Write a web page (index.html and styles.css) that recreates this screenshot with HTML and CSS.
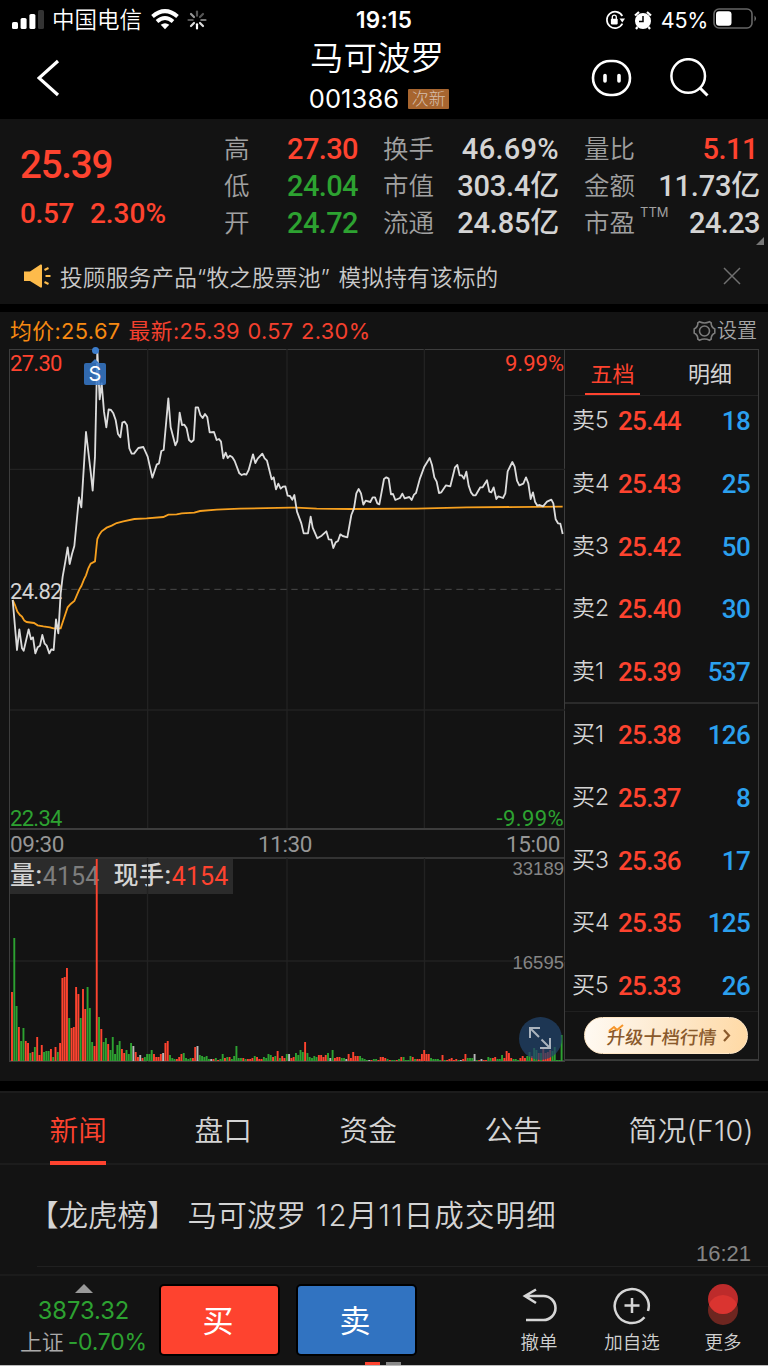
FILE: index.html
```html
<!DOCTYPE html>
<html lang="zh-CN">
<head>
<meta charset="utf-8">
<title>马可波罗 001386</title>
<link rel="stylesheet" href="styles.css">
</head>
<body>
<div class="app">
  <header class="top">
    <div class="status">
      <div class="status-left">
        <svg class="signal" width="32" height="20" viewBox="0 0 32 20"><g fill="#fff"><rect x="0" y="12" width="6" height="7" rx="1.6"/><rect x="8.6" y="8" width="6" height="11" rx="1.6"/><rect x="17.4" y="4" width="6" height="15" rx="1.6"/></g><rect x="26" y="0" width="6" height="19" rx="1.6" fill="#333"/></svg>
        <span class="carrier">中国电信</span>
        <svg class="wifi" width="28" height="21" viewBox="0 0 28 21"><g fill="none" stroke="#fff" stroke-width="4"><path d="M1.5 7.6Q14-3.2 26.500 7.600"/><path d="M6 12.400Q14 5.600 22 12.400"/></g><path d="M9.700 15.800Q14 12.500 18.300 15.800L14 20.300Z" fill="#fff"/></svg>
        <svg class="spin" width="20" height="20" viewBox="0 0 20 20" fill="none" stroke-width="2.200" stroke-linecap="round"><path d="M10 1.500v4.200" stroke="#555"/><path d="M16 4l-3 3" stroke="#555"/><path d="M18.500 10h-4.200" stroke="#777"/><path d="M16 16l-3-3" stroke="#ddd"/><path d="M10 18.500v-4.200" stroke="#fff"/><path d="M4 16l3-3" stroke="#ddd"/><path d="M1.500 10h4.200" stroke="#555"/><path d="M4 4l3 3" stroke="#999"/></svg>
      </div>
      <div class="clock">19:15</div>
      <div class="status-right">
        <svg width="20" height="20" viewBox="0 0 20 20"><path d="M17.300 6A8.200 8.200 0 1 0 17.400 13.700" fill="none" stroke="#fff" stroke-width="1.700"/><path d="M14.500 8.500h5.500l-2.700 4z" fill="#fff"/><rect x="5.900" y="8.800" width="6.800" height="5.600" rx=".8" fill="#fff"/><path d="M7.300 9V7.200a2 2 0 0 1 4 0V9" fill="none" stroke="#fff" stroke-width="1.300"/></svg>
        <svg class="alarm" width="18" height="19" viewBox="0 0 18 19"><circle cx="9" cy="10" r="8" fill="#fff"/><path d="M1 4.500L5 1M17 4.500L13 1M3.500 16l-1.500 2M14.500 16l1.500 2" stroke="#fff" stroke-width="2.200"/><path d="M9 5v5.500H5" fill="none" stroke="#000" stroke-width="1.500"/></svg>
        <span class="pct">45%</span>
        <svg class="battery" width="45" height="22" viewBox="0 0 45 22"><rect x="1" y="1" width="38" height="19" rx="5" fill="none" stroke="#666" stroke-width="1.600"/><rect x="3" y="3.300" width="15.500" height="14.400" rx="3" fill="#fff"/><path d="M41.500 7.500q3 3 0 6z" fill="#777"/></svg>
      </div>
    </div>
    <div class="nav">
      <svg class="back" width="24" height="38" viewBox="0 0 24 38"><path d="M21 2L2 19L21 36" fill="none" stroke="#fff" stroke-width="3.200"/></svg>
      <div class="title">
        <div class="name">马可波罗</div>
        <div class="code">001386<span class="tag">次新</span></div>
      </div>
      <svg class="robot" width="42" height="38" viewBox="0 0 42 38"><rect x="2" y="2" width="37" height="34" rx="17" fill="none" stroke="#fff" stroke-width="2.600"/><path d="M14 16.500v5.500M28 16.500v5.500" stroke="#fff" stroke-width="3.600" stroke-linecap="round"/></svg>
      <svg class="search" width="40" height="40" viewBox="0 0 40 40" fill="none" stroke="#fff"><circle cx="18.200" cy="18" r="16.800" stroke-width="2.500"/><path d="M29.500 29.500l8 8" stroke-width="3"/></svg>
    </div>
  </header>

  <section class="quote">
    <div class="figures">
      <div class="main-price num">
        <div class="price">25.39</div>
        <div class="change"><span>0.57</span><span>2.30%</span></div>
      </div>
      <dl class="stats">
        <dt>高</dt><dd class="num up">27.30</dd><dt>换手</dt><dd class="num wide">46.69%</dd><dt>量比</dt><dd class="num up last ratio">5.11</dd>
        <dt>低</dt><dd class="num down">24.04</dd><dt>市值</dt><dd class="num unit">303.4亿</dd><dt>金额</dt><dd class="num last unit">11.73亿</dd>
        <dt>开</dt><dd class="num down">24.72</dd><dt>流通</dt><dd class="num unit">24.85亿</dd><dt>市盈<sup>TTM</sup></dt><dd class="num last">24.23</dd>
      </dl>
      <i class="corner"></i>
    </div>
    <div class="notice">
      <svg width="27" height="24" viewBox="0 0 27 24"><path d="M0 7.500h6L16.500.500Q18 0 18 1.500v21Q18 24 16.500 23.500L6 17H0z" fill="#fdbb4b"/><path d="M20.500 6l4-2M21.500 12h5M20.500 18l4 2" stroke="#fdbb4b" stroke-width="2"/></svg>
      <span>投顾服务产品“牧之股票池” 模拟持有该标的</span>
      <svg class="close" width="18" height="18" viewBox="0 0 18 18"><path d="M1 1l16 16M17 1L1 17" stroke="#707070" stroke-width="1.500"/></svg>
    </div>
  </section>

  <section class="market">
    <div class="legend">
      <span class="avg">均价:25.67</span><span class="latest">最新:25.39 0.57 2.30%</span>
      <span class="settings"><svg width="23" height="22" viewBox="0 0 23 22" fill="none" stroke="#7b7b7b" stroke-width="1.600"><path d="M6.500 1.700Q11.500 4.200 16.500 1.700L18.200 3Q18 7 21.800 9V13Q18 15 18.200 19L16.500 20.300Q11.500 17.800 6.500 20.300L4.800 19Q5 15 1.200 13V9Q5 7 4.800 3Z"/><circle cx="11.500" cy="11" r="5"/></svg>设置</span>
    </div>
    <div class="board">
      <div class="charts">
        <div class="kline num">
          <svg width="555" height="479" viewBox="30 27 1665 1437" fill="none">
            <path d="M443 27V1464M861 27V1464M1273 27V1464M30 388H1695M30 1110H1695" stroke="#222" stroke-width="4"/>
            <path d="M30 748H1695" stroke="#4a4a4a" stroke-width="3" stroke-dasharray="19 14" stroke-dashoffset="14"/>
            <polyline stroke="#f6a01f" stroke-width="5.500" points="38,780 45,795 52,815 60,825 66,830 73,842 80,846 102,849 113,856 130,859 150,862 160,865 182,865 192,835 203,802 212,792 223,783 238,748 244,738 252,718 258,706 265,685 272,671 285,664 290,615 292,597 298,584 305,574 320,563 335,557 350,549 370,544 403,537 440,535 490,531 505,524 530,523 545,520 583,518 600,513 650,509 720,506 870,503 890,503 950,506 1050,507 1250,506 1400,502 1688,500"/>
            <polyline class="price-line" stroke="#dcdcdc" stroke-width="5.500" stroke-linejoin="round" points="38,780 51,930 58,868 66,925 71,932 86,868 93,898 99,892 106,940 113,922 120,917 127,885 134,911 140,917 148,940 154,928 161,930 168,838 175,880 182,760 188,710 196,665 203,622 209,672 216,642 223,618 237,472 244,502 258,276 272,395 278,452 285,350 292,30 299,178 305,130 312,215 319,262 326,208 333,210 340,220 347,240 354,282 361,292 367,248 374,245 381,256 388,325 395,341 402,341 415,324 430,321 443,350 457,413 470,374 477,370 484,333 491,330 505,175 512,262 526,316 532,303 539,218 546,255 553,254 560,265 567,300 574,306 581,300 587,202 594,202 601,225 608,234 615,222 622,232 629,277 642,276 650,300 657,297 663,305 670,355 677,338 683,354 690,347 697,352 704,363 718,400 725,405 732,402 739,404 746,390 759,343 766,369 773,356 787,341 794,355 801,362 815,418 821,412 828,448 835,431 842,446 849,440 856,439 863,467 870,468 877,479 883,465 891,515 904,550 911,580 924,580 932,530 938,563 952,595 965,587 979,574 986,598 994,599 1000,624 1007,607 1014,603 1021,583 1028,588 1042,592 1054,525 1062,505 1069,460 1076,447 1083,460 1090,494 1097,482 1111,486 1118,472 1125,472 1132,490 1138,493 1152,417 1159,412 1166,416 1173,463 1179,462 1186,480 1200,474 1207,461 1214,475 1228,471 1235,480 1242,464 1248,459 1260,415 1273,380 1289,354 1296,375 1303,412 1310,425 1317,459 1324,457 1338,436 1351,439 1365,382 1372,375 1379,406 1385,406 1392,416 1399,395 1406,437 1413,457 1420,466 1427,466 1441,442 1448,442 1461,421 1468,455 1474,457 1481,442 1489,477 1495,469 1509,474 1516,460 1523,394 1537,366 1544,380 1551,422 1558,436 1570,431 1578,412 1585,430 1592,477 1599,457 1605,485 1612,497 1619,495 1629,499 1641,485 1654,479 1660,490 1667,538 1674,550 1681,551 1688,582"/>
          </svg>
          <span class="lab top-left up">27.30</span><span class="lab top-right up">9.99%</span>
          <span class="lab mid-left">24.82</span>
          <span class="lab bot-left down">22.34</span><span class="lab bot-right down">-9.99%</span>
          <i class="dot"></i><span class="mark">S</span>
        </div>
        <div class="times num"><span>09:30</span><span>11:30</span><span>15:00</span></div>
        <div class="volume">
          <div class="vol-info num"><b>量:</b><span class="vol-a">4154</span><b class="vol-c">现手:</b><span class="up">4154</span></div>
          <svg id="bars" width="555" height="204" viewBox="10 858 555 204"><path d="M147.500 858V1062M287 858V1062M424.500 858V1062M10 961H565" stroke="#222" stroke-width="1.300"/></svg>
          <span class="scale s-top">33189</span><span class="scale s-mid">16595</span>
          <span class="expand"><svg width="24" height="24" viewBox="0 0 24 24" fill="none" stroke="#aab3bd" stroke-width="2"><path d="M2 12V2h10M2 2l9 9M22 12v10H12M22 22l-8.500-8.500"/></svg></span>
        </div>
      </div>
      <aside class="depth">
        <div class="depth-tabs"><span class="on">五档</span><span>明细</span></div>
        <div class="orders sells">
          <div><span>卖5</span><b>25.44</b><em>18</em></div>
          <div><span>卖4</span><b>25.43</b><em>25</em></div>
          <div><span>卖3</span><b>25.42</b><em>50</em></div>
          <div><span>卖2</span><b>25.40</b><em>30</em></div>
          <div><span>卖1</span><b>25.39</b><em>537</em></div>
        </div>
        <div class="orders buys">
          <div><span>买1</span><b>25.38</b><em>126</em></div>
          <div><span>买2</span><b>25.37</b><em>8</em></div>
          <div><span>买3</span><b>25.36</b><em>17</em></div>
          <div><span>买4</span><b>25.35</b><em>125</em></div>
          <div><span>买5</span><b>25.33</b><em>26</em></div>
        </div>
        <div class="upgrade"><div class="pill"><span>升级十档行情</span><svg width="8" height="13" viewBox="0 0 8 13"><path d="M1 1l5 5.500L1 12" fill="none" stroke="#8a5a2c" stroke-width="2.200"/></svg><svg class="spark" width="17" height="9" viewBox="0 0 17 9"><path d="M1 7l5-4 3 3 6-5" fill="none" stroke="#f6952a" stroke-width="2"/></svg></div></div>
      </aside>
    </div>
  </section>

  <nav class="tabs"><span class="on">新闻</span><span>盘口</span><span>资金</span><span>公告</span><span class="f10">简况(F10)</span></nav>
  <article class="news">
    <h3><span>【龙虎榜】</span><span class="subject">马可波罗 <span class="rest">12月11日成交明细</span></span></h3>
    <time>16:21</time>
    <hr>
  </article>

  <footer class="bar">
    <div class="index"><i></i><div class="idx">3873.32</div><div class="idx-sub">上证<span>-0.70%</span></div></div>
    <button class="buy">买</button><button class="sell">卖</button>
    <div class="act"><svg width="38" height="38" viewBox="0 0 38 38" fill="none" stroke="#d6d6d6" stroke-width="2.600"><path d="M16 2.500L5 9l11 7M5.500 9h18a12 12 0 0 1 0 24H6"/></svg>撤单</div>
    <div class="act add"><svg width="38" height="38" viewBox="0 0 38 38" fill="none" stroke="#d6d6d6" stroke-width="2.500"><path d="M31.500 30.300A17 17 0 1 1 35 24M19 11v15M11.500 18.500h15"/></svg>加自选</div>
    <div class="act more"><svg width="30" height="41" viewBox="0 0 30 41"><circle cx="15" cy="26" r="15" fill="#6e2620"/><circle cx="15" cy="15" r="15" fill="#bd2b2b"/><path d="M1.040 20.500A15 15 0 0 1 28.960 20.500A15 15 0 0 1 1.040 20.500Z" fill="#da3430"/></svg>更多</div>
    <i class="page p1"></i><i class="page p2"></i>
  </footer>
</div>
<script src="volume.js"></script>
</body>
</html>
```

FILE: volume.js
```js
// One entry per minute: colour letter followed by the bar height in pixels.
const minutes = `r69 g123 g55 r34 g20 g33 r20 r18 g8 r9 g14 r24 r6 r16 g9 g10 g10 r12 g4 r14 g9 r18 r83 r84 r93 g43 r33 r34 r74 r67 g43 r72 r52 g74 g53 g19 r15 r202 g44 r32
g19 g23 r17 g11 g24 g7 g16 g20 r12 r8 g11 g7 g18 w15 r9 r4 w6 r3 g4 g7 g7 g11 r7 r4 r4 r7 w8 r18 r20 g6 g3 g2 r2 r4 r7 g8 g3 g2 g3 r3
r14 w15 g6 g5 g4 g5 g2 w2 r2 g3 r1 g2 g7 r3 g4 r4 g2 g5 g15 g3 g3 r3 g2 r2 r2 r3 g5 r4 r2 r2 g4 g3 g7 g6 r4 g5 r10 g3 r5 r3
g7 w7 r3 r4 g8 g6 g11 g9 r19 g8 g4 g3 g5 g4 r6 r6 r4 r6 g8 w3 g11 r3 r4 r4 g3 g3 w2 r7 r3 r9 r5 r5 g5 g3 g2 g1 w1 r1 g2 g2
r1 r4 r4 r3 g2 r1 g1 g1 r1 g2 r4 g4 g1 g1 g5 r4 g2 r2 r2 r7 r11 r7 r7 g3 g2 g2 g2 g1 r6 g1 r1 r2 r3 r1 r2 g1 w1 r2 r7 g3
g3 g3 w7 g1 r1 w2 r1 r1 g4 g3 r3 r4 g2 g2 g6 r3 r10 r8 r3 g2 g2 g1 r3 r5 r3 g5 g9 r5 g13 g11 r8 g8 r12 r8 r9 r11 g10 g14 g1 g1 g26`.split(/\s+/);
const colors = { r: '#fe432f', g: '#2da231', w: '#b8b8b8' };
const paths = { r: '', g: '', w: '' };
minutes.forEach((m, i) => {
  paths[m[0]] += `M${(12 + i * 2.29).toFixed(2)} 1061v-${m.slice(1)}`;
});
for (const key in paths) {
  const p = document.createElementNS('http://www.w3.org/2000/svg', 'path');
  p.setAttribute('d', paths[key]);
  p.setAttribute('stroke', colors[key]);
  p.setAttribute('stroke-width', '1.9');
  document.getElementById('bars').appendChild(p);
}
```

FILE: styles.css
```css
* { box-sizing: border-box; }
body { margin: 0; background: #000; }
.app { width: 768px; height: 1366px; overflow: hidden; display: flex; flex-direction: column; color: #d4d4d4; font-family: Inter, "Noto Sans CJK SC", sans-serif; font-weight: 400; }
svg { display: block; flex: none; }
.num { font-family: Roboto, "Noto Sans CJK SC", sans-serif; font-weight: 490; }
.up { color: #fe432f; }
.down { color: #2da231; }

.top { height: 119px; flex: none; background: #000; color: #fff; }
.status { height: 40px; display: flex; justify-content: space-between; padding: 0 9px 0 12px; }
.status-left, .status-right { display: flex; align-items: center; width: 320px; }
.status-right { justify-content: flex-end; }
.carrier { font-size: 22.500px; line-height: 40px; margin-left: 8px; white-space: nowrap; font-weight: 350; }
.wifi { margin-left: 9px; margin-top: -2px; }
.spin { margin-left: 8px; }
.clock { font-size: 22.500px; font-weight: 600; line-height: 40px; letter-spacing: .3px; margin-left: -3px; }
.alarm { margin-left: 9px; }
.pct { font-size: 21.500px; margin: 0 5px 0 9px; line-height: 40px; letter-spacing: -.3px; }
.battery { margin-right: 1px; margin-top: -2px; }
.nav { height: 79px; display: flex; align-items: flex-start; padding-left: 37px; }
.back { margin-top: 19px; }
.title { width: 245px; margin-left: 195px; display: flex; flex-direction: column; align-items: center; }
.name { font-size: 33.500px; line-height: 37px; height: 43px; margin-left: -3px; font-weight: 350; }
.code { font-size: 25.500px; line-height: 32px; display: flex; align-items: center; letter-spacing: .1px; margin-left: 1px; }
.tag { font-size: 17px; line-height: 20px; height: 20px; width: 41px; text-align: center; background: #a7652f; color: #d6bfad; margin-left: 9px; font-weight: 300; border-radius: 1px; }
.robot { margin: 19px 0 0 90px; }
.search { margin: 18px 0 0 37px; }

.quote { height: 185px; flex: none; background: #131313; }
.figures { position: relative; height: 127px; display: flex; padding-left: 20px; }
.main-price { width: 204px; color: #fe432f; padding-top: 24px; }
.price { font-size: 38.500px; line-height: 44px; letter-spacing: -1.200px; }
.change { font-size: 28px; line-height: 32px; margin-top: 11px; letter-spacing: -.4px; display: flex; gap: 16px; }
.change span + span { letter-spacing: 0; }
.stats { margin: 11px 0 0; width: 536px; height: 112px; display: grid; grid-template-columns: 49px 85px 76px 100px 76px 150px; grid-template-rows: repeat(3, 37.200px); }
.stats dt { font-size: 25.500px; line-height: 37px; font-weight: 350; color: #a0a0a0; white-space: nowrap; }
.stats dt:nth-of-type(3n+2) { padding-left: 25px; }
.stats dt:nth-of-type(3n) { padding-left: 50px; }
.stats dd { margin: 0; font-size: 29px; line-height: 38px; letter-spacing: -.6px; text-align: right; white-space: nowrap; justify-self: end; }
.stats dd:not(.last):nth-of-type(3n+2) { margin-right: -25px; }
.stats dd.wide { letter-spacing: .3px; }
.stats dd.unit { letter-spacing: -.2px; }
.stats dd.ratio { letter-spacing: -.5px; padding-right: 2px; }
.stats sup { font-size: 13px; line-height: 0; letter-spacing: 0; vertical-align: 15px; margin-left: 5px; font-weight: 400; }
.corner { position: absolute; right: 4px; bottom: 1px; border: 4.500px solid transparent; border-right-color: #777; border-bottom-color: #777; }
.notice { height: 58px; display: flex; align-items: center; padding: 2px 27px 0 24px; font-size: 22.700px; letter-spacing: .15px; white-space: nowrap; color: #c9c9c9; word-spacing: 2px; font-weight: 350; }
.notice span { margin-left: 9px; }
.close { margin-left: auto; }

.market { height: 769px; margin-top: 8px; flex: none; background: #131313; padding: 0 9px; }
.legend { height: 37px; font-size: 21.800px; line-height: 38px; display: flex; white-space: nowrap; letter-spacing: .4px; font-weight: 380; }
.avg { color: #f78a12; margin-left: 1px; }
.latest { color: #f4402e; margin-left: 8px; word-spacing: 1px; letter-spacing: .35px; }
.settings { color: #a5a5a5; margin-left: auto; margin-right: 2px; display: flex; align-items: center; gap: 1px; font-size: 20px; line-height: 34px; letter-spacing: 0; font-weight: 350; }
.board { display: flex; height: 713px; }
.charts { width: 556px; border: solid #3d3d3d; border-width: 1px 1px 2px; }
.kline { position: relative; height: 480px; border-bottom: 2px solid #3d3d3d; display: flow-root; }
.kline > svg { margin-top: -1px; }
.lab { position: absolute; font-size: 22px; font-weight: 400; line-height: 24px; letter-spacing: -.7px; }
.top-left { left: 0; top: 2px; }
.top-right { right: 0; top: 2px; letter-spacing: 0; }
.mid-left { left: 0; top: 230px; }
.bot-left { left: 0; bottom: -3px; }
.bot-right { right: 0; bottom: -3px; letter-spacing: .4px; }
.dot { position: absolute; left: 82px; top: -3px; width: 7px; height: 7px; border-radius: 50%; background: #3c7dcc; }
.mark { position: absolute; left: 74px; top: 13px; width: 22px; height: 22px; background: rgba(55,120,200,.86); color: #fff; font: 400 20px/23px Inter; text-align: center; border-radius: 2px; }
.mark::before { content: ""; position: absolute; left: 7px; top: -4px; border: solid transparent; border-width: 0 4px 4px; border-bottom-color: #3977c0; }
.times { height: 29px; display: flex; justify-content: space-between; padding: 0 4px 0 0; border-bottom: 2px solid #333; font-size: 22.500px; font-weight: 400; line-height: 29px; color: #969696; letter-spacing: -.4px; }
.volume { position: relative; height: 201px; display: flow-root; }
#bars { position: relative; margin-top: -1px; }
.vol-info { position: absolute; left: 0; top: 0; width: 223px; height: 35px; background: #2b2b2b; font-size: 25px; line-height: 35px; display: flex; white-space: nowrap; }
.vol-info b { font-weight: 500; font-size: 25px; line-height: 33px; color: #d4d4d4; letter-spacing: .6px; }
.vol-info span { letter-spacing: .1px; font-weight: 400; }
.vol-a { color: #7d7d7d; }
.vol-info .vol-c { margin-left: 14px; }
.scale { position: absolute; right: 0; font: 18.500px/20px "Liberation Sans", sans-serif; color: #858585; }
.s-top { top: 0; }
.s-mid { top: 94px; }
.expand { position: absolute; right: 2px; top: 158px; width: 43px; height: 43px; border-radius: 50%; background: rgba(34,67,106,.75); padding: 9px; }

.depth { width: 194px; height: 712px; border: solid #3a3a3a; border-width: 1px 1px 2px 0; }
.depth-tabs { height: 46px; border-bottom: 1px solid #242424; display: flex; justify-content: space-between; padding: 0 26px 0 20px; font-size: 22px; line-height: 48px; }
.depth-tabs .on { color: #fe432f; border-bottom: 2px solid #fe432f; width: 55px; height: 45px; text-align: center; }
.orders div { height: 62.800px; display: flex; line-height: 49px; padding: 0 8px 0 7px; font-size: 23px; }
.orders span { width: 46px; font-weight: 350; }
.orders b, .orders em { font: 490 26px/51px Roboto; letter-spacing: -.7px; color: #fe432f; }
.orders em { margin-left: auto; color: #2ba0ee; }
.sells { height: 308px; border-bottom: 2px solid #2b2b2b; }
.buys { height: 307px; padding-top: 6px; }
.upgrade { border-top: 1px solid #202020; padding: 5px 10px 0 19px; }
.pill { position: relative; height: 37px; border-radius: 19px; background: linear-gradient(100deg, #fffaf3, #fde7c9 55%, #ffd9a4); border: 1px solid #ffe7c6; display: flex; align-items: center; justify-content: flex-end; gap: 6px; padding-right: 16px; color: #8a5a2c; font-size: 18.300px; font-weight: 500; }
.pill > span { transform: skewX(-6deg); }
.spark { position: absolute; left: 23px; top: 6px; }

.tabs { height: 74px; margin-top: 10px; flex: none; background: #131313; border-top: 2px solid #1c1c1c; border-bottom: 2px solid #1c1c1c; display: flex; font-size: 28.700px; line-height: 75px; padding-left: 49.500px; white-space: nowrap; font-weight: 350; }
.tabs span { width: 145px; flex: none; }
.tabs .on { width: 56px; margin-right: 89px; color: #fe432f; border-bottom: 4px solid #fe432f; height: 72px; }
.tabs .f10 { margin-left: -1px; letter-spacing: .3px; }
.news { height: 109px; flex: none; background: #131313; }
.news h3 { margin: 0; padding: 31px 0 0 29px; font-size: 29.500px; line-height: 38px; font-weight: 350; display: flex; white-space: nowrap; }
.news .subject { margin-left: 11px; letter-spacing: .2px; }
.news .rest { letter-spacing: 1.100px; margin-left: 1px; }
.news time { display: block; padding: 9px 17px 0 0; text-align: right; font: 22px/22px "Liberation Sans"; color: #858585; }
.news hr { border: 0; height: 1px; background: #202020; margin: 1px 0 0 37px; }

.bar { position: relative; height: 92px; flex: none; background: #131313; border-top: 2px solid #1b1b1b; border-bottom: 1px solid #bbb; display: flex; padding-top: 8px; }
.index { width: 159px; padding-left: 8px; text-align: center; white-space: nowrap; }
.index i { display: block; width: 0; border: solid transparent; border-width: 0 9px 9px; border-bottom-color: #999; margin: 0 auto; }
.idx { color: #2da231; font-size: 23.700px; line-height: 30px; margin-top: 3px; }
.idx-sub { font-size: 22px; line-height: 32px; color: #aaa; font-weight: 350; letter-spacing: -.2px; }
.idx-sub span { color: #2da231; margin-left: 4px; font-weight: 400; font-size: 23px; }
.bar button { width: 121px; height: 72px; border: 2px solid #000; border-radius: 5px; color: #fff; background: #fe432f; font: 400 31px/64px "Noto Sans CJK SC"; padding: 0 3px 3px 0; flex: none; }
.bar .sell { background: #3173c1; margin-left: 16px; }
.act { width: 60px; margin-left: 92px; display: flex; flex-direction: column; align-items: center; font-size: 18.500px; line-height: 28px; color: #d0d0d0; white-space: nowrap; padding-top: 3px; gap: 3px; font-weight: 350; }
.act.add { margin-left: 33px; }
.act.more { margin-left: 31px; padding-top: 0; }
.page { position: absolute; bottom: 0; width: 15px; height: 3px; background: #fe432f; left: 365px; }
.page.p2 { left: 386px; background: #888; }
```
